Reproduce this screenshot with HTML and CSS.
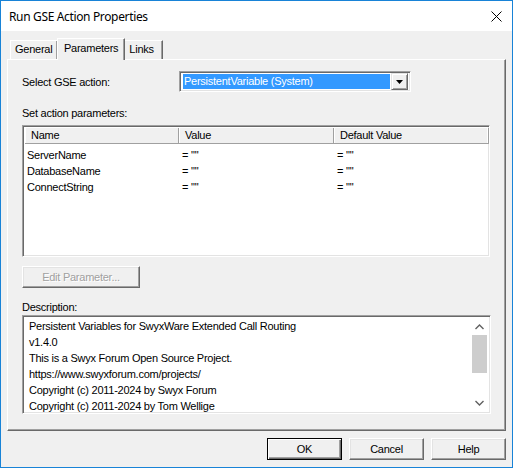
FILE: index.html
```html
<!DOCTYPE html>
<html lang="en">
<head>
<meta charset="UTF-8">
<title>Run GSE Action Properties</title>
<link rel="stylesheet" href="styles.css">
</head>
<body>
<div class="dialog">
  <div class="titlebar">
    <span class="title">Run GSE Action Properties</span>
    <svg class="close" width="11" height="11" viewBox="0 0 11 11">
      <path d="M0.5 0.5 L10.5 10.5 M10.5 0.5 L0.5 10.5" stroke="#000" stroke-width="1" fill="none"/>
    </svg>
  </div>

  <div class="tabs">
    <div class="tab">General</div>
    <div class="tab active">Parameters</div>
    <div class="tab">Links</div>
  </div>

  <div class="panel">
    <div class="row-select">
      <span class="label">Select GSE action:</span>
      <div class="combo">
        <div class="combo-value">PersistentVariable (System)</div>
        <div class="combo-btn">
          <svg width="7" height="4" viewBox="0 0 7 4"><path d="M0 0 H7 L3.5 4 Z" fill="#000"/></svg>
        </div>
      </div>
    </div>

    <div class="label caption">Set action parameters:</div>
    <div class="listview sunken">
      <div class="lv-header">
        <div class="lv-col">Name</div>
        <div class="lv-col">Value</div>
        <div class="lv-col">Default Value</div>
      </div>
      <div class="lv-body">
        <div class="lv-row"><span>ServerName</span><span>= ""</span><span>= ""</span></div>
        <div class="lv-row"><span>DatabaseName</span><span>= ""</span><span>= ""</span></div>
        <div class="lv-row"><span>ConnectString</span><span>= ""</span><span>= ""</span></div>
      </div>
    </div>

    <button class="btn edit-btn" disabled>Edit Parameter...</button>

    <div class="label caption desc-caption">Description:</div>
    <div class="description sunken">
      <div class="desc-text">
        <div>Persistent Variables for SwyxWare Extended Call Routing</div>
        <div>v1.4.0</div>
        <div>This is a Swyx Forum Open Source Project.</div>
        <div>https://www.swyxforum.com/projects/</div>
        <div>Copyright (c) 2011-2024 by Swyx Forum</div>
        <div>Copyright (c) 2011-2024 by Tom Wellige</div>
      </div>
      <div class="scrollbar">
        <div class="arrow">
          <svg width="9" height="6" viewBox="0 0 9 6"><path d="M0.5 5 L4.5 1 L8.5 5" stroke="#606060" stroke-width="1.4" fill="none"/></svg>
        </div>
        <div class="thumb"></div>
        <div class="track"></div>
        <div class="arrow">
          <svg width="9" height="6" viewBox="0 0 9 6"><path d="M0.5 1 L4.5 5 L8.5 1" stroke="#606060" stroke-width="1.4" fill="none"/></svg>
        </div>
      </div>
    </div>
  </div>

  <div class="footer">
    <button class="btn default">OK</button>
    <button class="btn">Cancel</button>
    <button class="btn">Help</button>
  </div>
</div>
</body>
</html>
```

FILE: styles.css
```css
body {
    margin: 0;
    padding: 0;
    background: #f0f0f0;
    font-family: "Liberation Sans", Arial, sans-serif;
    font-size: 11px;
    letter-spacing: -0.25px;
    color: #000;
}

.dialog {
    width: 513px;
    height: 468px;
    box-sizing: border-box;
    border: 1px solid #1883d7;
    background: #f0f0f0;
    display: flex;
    flex-direction: column;
}

.titlebar {
    height: 30px;
    background: #fff;
    display: flex;
    align-items: center;
    justify-content: space-between;
    padding: 0 10px 0 8px;
}
.title {
    font-family: "Noto Sans", sans-serif;
    font-size: 12px;
    letter-spacing: -0.35px;
    margin-top: 1px;
}

/* tab strip */
.tabs {
    display: flex;
    align-items: flex-end;
    height: 22px;
    margin-top: 6px;
    padding-left: 9px;
}
.tab {
    height: 18px;
    line-height: 17px;
    padding: 0 6px 0 4px;
    border-top: 1px solid #fff;
    border-left: 1px solid #fff;
    border-right: 1px solid #696969;
    box-shadow: inset -1px 0 #a0a0a0;
}
.tab:first-child {
    width: 36px;
}
.tab.active {
    height: 21px;
    line-height: 19px;
    padding: 0 6px;
    margin-left: -1px;
    margin-right: -1px;
    margin-bottom: -1px;
    background: #f0f0f0;
    position: relative;
    z-index: 1;
}
.tab:last-child {
    padding: 0 8px 0 4px;
}

.panel {
    margin-left: 6px;
    width: 499px;
    height: 372px;
    box-sizing: border-box;
    border: 1px solid;
    border-color: #fff #696969 #696969 #fff;
    box-shadow: inset -1px -1px #a0a0a0;
    padding: 11px 0 0 14px;
}

.label {
    display: block;
    height: 14px;
    line-height: 14px;
}

.row-select {
    display: flex;
    align-items: center;
    height: 21px;
}
.row-select .label {
    width: 157px;
    margin-top: 1px;
}

.sunken {
    box-sizing: border-box;
    border: 1px solid;
    border-color: #a0a0a0 #fff #fff #a0a0a0;
    box-shadow: inset 1px 1px #696969, inset -1px -1px #e3e3e3;
}

.combo {
    width: 232px;
    height: 21px;
    box-sizing: border-box;
    border: 1px solid;
    border-color: #a0a0a0 #fff #fff #a0a0a0;
    box-shadow: inset 1px 1px #696969, inset -1px -1px #e3e3e3;
    background: #fff;
    display: flex;
    align-items: center;
    padding: 0 2px;
}
.combo-value {
    flex: 1;
    height: 15px;
    line-height: 15px;
    margin-left: 1px;
    padding-left: 1px;
    background: #3399ff;
    color: #fff;
}
.combo-btn {
    width: 15px;
    height: 15px;
    margin-left: 1px;
    background: #f0f0f0;
    border: 1px solid;
    border-color: #e3e3e3 #696969 #696969 #e3e3e3;
    box-shadow: inset 1px 1px #fff, inset -1px -1px #a0a0a0;
    display: flex;
    align-items: center;
    justify-content: center;
}

.caption {
    margin-top: 14px;
}

/* parameter list */
.listview {
    margin-top: 5px;
    width: 468px;
    height: 132px;
    background: #fff;
    padding: 2px;
}
.lv-header {
    display: grid;
    grid-template-columns: 154px 155px 155px;
    height: 16px;
    background: #f0f0f0;
}
.lv-col {
    line-height: 15px;
    padding-left: 6px;
    border-right: 1px solid #a0a0a0;
    border-bottom: 1px solid #a0a0a0;
    box-shadow: inset 1px 0 #fff;
}
.lv-body {
    padding-top: 3px;
}
.lv-row {
    display: grid;
    grid-template-columns: 154px 155px 155px;
    height: 16px;
    line-height: 16px;
}
.lv-row span {
    padding-left: 2px;
}
.lv-row span + span {
    padding-left: 3px;
}

.btn {
    font-family: "Liberation Sans", Arial, sans-serif;
    font-size: 11px;
    letter-spacing: -0.25px;
    color: #000;
    background: #f0f0f0;
    border: 1px solid;
    border-color: #fff #696969 #696969 #fff;
    box-shadow: inset -1px -1px #a0a0a0, inset 1px 1px #e3e3e3;
    padding: 0;
    box-sizing: border-box;
}

.edit-btn {
    display: block;
    margin-top: 9px;
    width: 118px;
    height: 22px;
    color: #a0a0a0;
    text-shadow: 1px 1px #fff;
}

.desc-caption {
    margin-top: 12px;
}

.description {
    margin-top: 1px;
    width: 469px;
    height: 99px;
    background: #fff;
    padding: 2px;
    display: flex;
}
.desc-text {
    flex: 1;
    padding-left: 4px;
    line-height: 16px;
}
.scrollbar {
    width: 17px;
    display: flex;
    flex-direction: column;
    background: #fff;
}
.scrollbar .arrow {
    height: 17px;
    display: flex;
    align-items: center;
    justify-content: center;
}
.scrollbar .thumb {
    height: 38px;
    margin: 0 1px;
    background: #cdcdcd;
}
.scrollbar .track {
    flex: 1;
}

/* dialog buttons */
.footer {
    display: flex;
    justify-content: flex-end;
    gap: 7px;
    margin-top: 7px;
    padding-right: 6px;
}
.footer .btn {
    width: 75px;
    height: 22px;
}
.footer .btn.default {
    border: 1px solid #000;
    box-shadow: inset 1px 1px #fff, inset -1px -1px #696969, inset -2px -2px #a0a0a0;
}
```
